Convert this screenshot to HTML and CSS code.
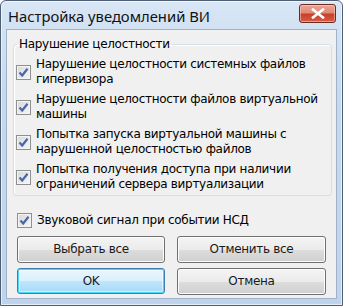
FILE: index.html
```html
<!DOCTYPE html>
<html lang="ru">
<head>
<meta charset="utf-8">
<link rel="stylesheet" href="styles.css">
</head>
<body>
<div class="window">
  <div class="titlebar">
    <span class="title">Настройка уведомлений ВИ</span>
    <div class="close">
      <svg width="14" height="11" viewBox="0 0 14 11"><path d="M2 1.5 L12 9.5 M12 1.5 L2 9.5" stroke="#fff" stroke-width="2.6" stroke-linecap="square" fill="none"/></svg>
    </div>
  </div>
  <div class="client">
    <fieldset class="group">
      <legend class="legend">Нарушение целостности</legend>
      <div class="group-body">
        <div class="item"><span class="cb"></span><span class="txt">Нарушение целостности системных файлов<br>гипервизора</span></div>
        <div class="item"><span class="cb"></span><span class="txt">Нарушение целостности файлов виртуальной<br>машины</span></div>
        <div class="item"><span class="cb"></span><span class="txt">Попытка запуска виртуальной машины с<br>нарушенной целостностью файлов</span></div>
        <div class="item"><span class="cb"></span><span class="txt">Попытка получения доступа при наличии<br>ограничений сервера виртуализации</span></div>
      </div>
    </fieldset>
    <div class="item sound"><span class="cb"></span><span class="txt">Звуковой сигнал при событии НСД</span></div>
    <div class="buttons">
      <div class="btn">Выбрать все</div>
      <div class="btn">Отменить все</div>
      <div class="btn default">OK</div>
      <div class="btn">Отмена</div>
    </div>
  </div>
</div>
</body>
</html>
```
FILE: styles.css
```css
html, body {
  margin: 0;
  padding: 0;
  background: #ffffff;
}
.window {
  width: 343px;
  height: 306px;
  box-sizing: border-box;
  border: 1px solid #4e5f73;
  border-radius: 6px 6px 0 0;
  background: linear-gradient(#d8e6f5 0%, #c6d9ee 30%, #bfd4ec 100%);
  padding: 0 5px 6px 5px;
  display: flex;
  flex-direction: column;
  box-shadow: inset 0 0 0 1px rgba(255,255,255,0.6);
}
.titlebar {
  height: 28px;
  display: flex;
  align-items: center;
  justify-content: space-between;
  flex: none;
}
.title {
  font-family: "Noto Sans", sans-serif;
  font-size: 14.8px;
  color: #111;
  padding-left: 2px;
  margin-top: 1px;
}
.close {
  width: 37px;
  height: 19px;
  box-sizing: border-box;
  border: 1px solid #6d2a20;
  border-radius: 3px;
  background: linear-gradient(#eca695 0%, #e08a76 45%, #c8402a 55%, #d55f48 100%);
  display: flex;
  align-items: center;
  justify-content: center;
  margin-top: -3px;
  margin-right: 1px;
  box-shadow: inset 0 0 0 1px rgba(255,220,210,0.5);
}
.client {
  flex: 1;
  background: #f0f0f0;
  border: 1px solid #9fb2c8;
  display: flex;
  flex-direction: column;
  padding: 7px 4px 0 6px;
  font-family: "DejaVu Sans", sans-serif;
  font-size: 12px;
  letter-spacing: -0.3px;
  color: #000;
}
.group {
  margin: 0;
  padding: 0;
  border: 1px solid #d5dfe5;
  border-radius: 3px;
  box-shadow: 1px 1px 0 #fff inset;
}
.legend {
  margin-left: 3px;
  padding: 0 2px;
  line-height: 15px;
}
.group-body {
  display: flex;
  flex-direction: column;
  gap: 5px;
  padding: 5px 0 3px 2px;
}
.item {
  display: flex;
  align-items: center;
  gap: 5px;
  line-height: 15px;
}
.cb {
  flex: none;
  width: 15px;
  height: 15px;
  box-sizing: border-box;
  border: 1px solid #8e8f8f;
  background:
    url("data:image/svg+xml;utf8,<svg xmlns='http://www.w3.org/2000/svg' width='13' height='13' viewBox='0 0 13 13'><path d='M2.5 6.5 L5.2 9.5 L10.5 2.8' stroke='%234a67a8' stroke-width='2.2' fill='none'/></svg>") center/13px 13px no-repeat,
    linear-gradient(135deg, #d8d8d8, #f6f6f6);
  box-shadow: inset 0 0 0 1px #f4f4f4;
}
.sound {
  margin-top: 17px;
  padding-left: 4px;
}
.buttons {
  display: grid;
  grid-template-columns: 148px 149px;
  column-gap: 12px;
  row-gap: 5px;
  margin-top: 8px;
  padding-left: 4px;
}
.btn {
  height: 27px;
  box-sizing: border-box;
  border: 1px solid #707070;
  border-radius: 3px;
  background: linear-gradient(#f4f4f4 0%, #ebebeb 50%, #dddddd 51%, #cfcfcf 100%);
  box-shadow: inset 0 0 0 1px #fcfcfc;
  display: flex;
  align-items: center;
  justify-content: center;
  line-height: 15px;
  color: #1a1a1a;
}
.btn.default {
  height: 26px;
  border-color: #3c7fb1;
  background: linear-gradient(#eaf6fd 0%, #d9f0fc 50%, #bee6fd 51%, #a7d9f5 100%);
  box-shadow: inset 0 0 0 1px #48d7fc, inset 0 0 0 2px rgba(255,255,255,0.5);
}
```
